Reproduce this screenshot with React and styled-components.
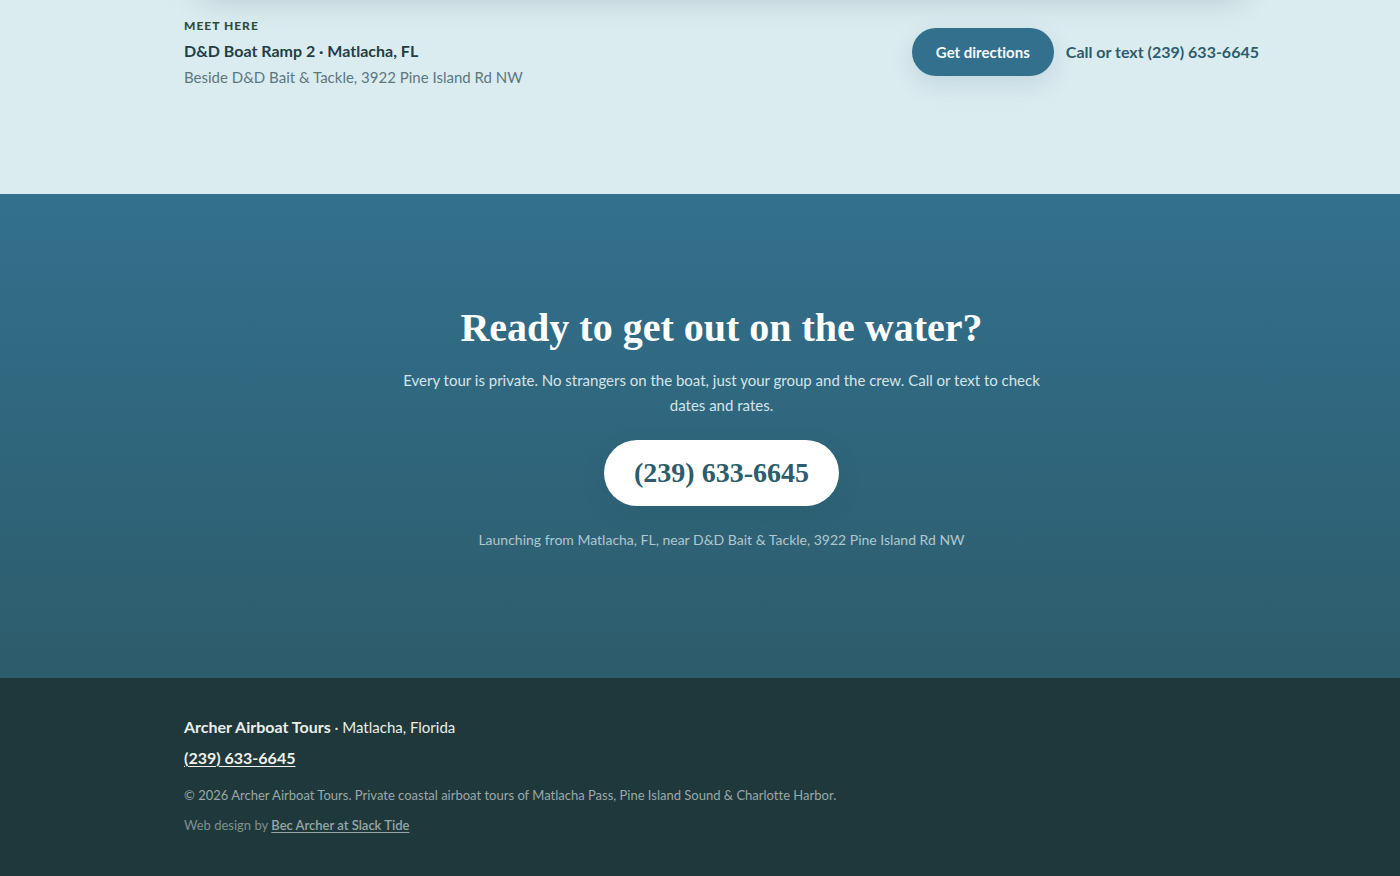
import React from 'react';
import styled, { createGlobalStyle, ThemeProvider } from 'styled-components';

const theme = {
  sans: "Lato, 'Open Sans', sans-serif",
  serif: "'Liberation Serif', 'Times New Roman', serif",
  mist: '#dbecf0',
  water: '#32708e',
  deep: '#2d5c6b',
  ink: '#1f383c',
};

const GlobalStyle = createGlobalStyle`
  *, *::before, *::after {
    box-sizing: border-box;
  }
  body {
    margin: 0;
    background: #1f383c;
    color: #1f383c;
    font-family: ${({ theme }) => theme.sans};
    font-size: 16px;
    font-variant-ligatures: none;
    line-height: 24px;
    overflow-x: hidden;
  }
  h2, p {
    margin: 0;
  }
`;

const Wrap = styled('div')`
  width: 100%;
  max-width: 1075px;
  margin: 0 auto;
`;

const MeetSection = styled('section')`
  padding: 0 24px 104px 67px;
  background-color: ${({ theme }) => theme.mist};
  overflow: hidden;
`;

// only the shadow under the map card reaches into view
const MapFrame = styled('div')`
  height: 240px;
  margin-top: -240px;
  border-radius: 20px;
  box-shadow: 0 12px 32px -16px rgba(31, 60, 85, 0.24);
`;

const MeetRow = styled('div')`
  display: flex;
  flex-wrap: wrap;
  align-items: center;
  justify-content: space-between;
  gap: 16px;
  padding-top: 14px;
`;

const Label = styled('p')`
  color: #2f4d3c;
  font-size: 12px;
  font-weight: 900;
  letter-spacing: 1px;
  text-transform: uppercase;
`;

const Place = styled('p')`
  color: #1f3f47;
  font-weight: 700;
  line-height: 26px;
`;

const Address = styled('p')`
  color: #5c777e;
  font-size: 15px;
  line-height: 26px;
`;

const Actions = styled('div')`
  display: flex;
  flex-wrap: wrap;
  align-items: center;
  gap: 12px;
`;

const Button = styled('a')`
  padding: 12px 24px;
  border-radius: 999px;
  background-color: ${({ theme }) => theme.water};
  box-shadow: 0 8px 24px rgba(40, 80, 120, 0.14);
  color: #f4fafb;
  font-size: 15px;
  font-weight: 700;
  text-decoration: none;
`;

const CallLink = styled('a')`
  color: ${({ theme }) => theme.deep};
  font-weight: 700;
  text-decoration: none;
`;

const Cta = styled('section')`
  display: flex;
  flex-direction: column;
  align-items: center;
  padding: 108px 24px 126px 67px;
  background: linear-gradient(
    180deg,
    ${({ theme }) => theme.water},
    ${({ theme }) => theme.deep}
  );
  text-align: center;
`;

const Title = styled('h2')`
  color: #ffffff;
  font-family: ${({ theme }) => theme.serif};
  font-size: 40px;
  font-weight: 700;
  line-height: 52px;
`;

const Lead = styled('p')`
  max-width: 660px;
  margin-top: 14px;
  color: #d3e5ea;
  font-size: 15px;
  line-height: 25px;
`;

const PhoneButton = styled('a')`
  margin-top: 22px;
  padding: 16px 30px;
  border-radius: 999px;
  background-color: #ffffff;
  box-shadow: 0 8px 24px rgba(31, 75, 85, 0.12);
  color: ${({ theme }) => theme.deep};
  font-family: ${({ theme }) => theme.serif};
  font-size: 28px;
  font-weight: 700;
  line-height: 34px;
  text-decoration: none;
`;

const Launch = styled('p')`
  margin-top: 22px;
  color: #afc8d0;
  font-size: 14px;
`;

const FooterBar = styled('footer')`
  padding: 36px 24px 38px 67px;
  background-color: ${({ theme }) => theme.ink};
  color: #e9eee9;
`;

const FooterLine = styled('p')`
  font-size: 15px;
  line-height: 26px;

  strong {
    font-size: 16px;
  }
`;

const FooterPhone = styled('a')`
  display: inline-block;
  margin-top: 5px;
  color: #f1f1ea;
  font-weight: 700;
  line-height: 26px;
  text-underline-offset: 2px;
`;

const SmallPrint = styled('p')`
  margin-top: ${({ $gap }) => $gap}px;
  color: ${({ $dim }) => ($dim ? '#7f9091' : '#9ba8a8')};
  font-size: 13px;
  line-height: 22px;

  a {
    color: #98a6a6;
    font-weight: 600;
    text-underline-offset: 2px;
  }
`;

const App = () => (
  <ThemeProvider theme={theme}>
    <GlobalStyle />
    <main>
      <MeetSection>
        <Wrap>
          <MapFrame />
          <MeetRow>
            <div>
              <Label>Meet here</Label>
              <Place>D&amp;D Boat Ramp 2 · Matlacha, FL</Place>
              <Address>Beside D&amp;D Bait &amp; Tackle, 3922 Pine Island Rd NW</Address>
            </div>
            <Actions>
              <Button href="#directions">Get directions</Button>
              <CallLink href="tel:+12396336645">Call or text (239) 633-6645</CallLink>
            </Actions>
          </MeetRow>
        </Wrap>
      </MeetSection>
      <Cta>
        <Title>Ready to get out on the water?</Title>
        <Lead>
          Every tour is private. No strangers on the boat, just your group and the crew. Call or
          text to check dates and rates.
        </Lead>
        <PhoneButton href="tel:+12396336645">(239) 633-6645</PhoneButton>
        <Launch>Launching from Matlacha, FL, near D&amp;D Bait &amp; Tackle, 3922 Pine Island Rd NW</Launch>
      </Cta>
    </main>
    <FooterBar>
      <Wrap>
        <FooterLine>
          <strong>Archer Airboat Tours</strong> · Matlacha, Florida
        </FooterLine>
        <FooterPhone href="tel:+12396336645">(239) 633-6645</FooterPhone>
        <SmallPrint $gap={13}>
          © 2026 Archer Airboat Tours. Private coastal airboat tours of Matlacha Pass, Pine Island
          Sound &amp; Charlotte Harbor.
        </SmallPrint>
        <SmallPrint $gap={8} $dim>
          Web design by <a href="#slack-tide">Bec Archer at Slack Tide</a>
        </SmallPrint>
      </Wrap>
    </FooterBar>
  </ThemeProvider>
);

export default App;
